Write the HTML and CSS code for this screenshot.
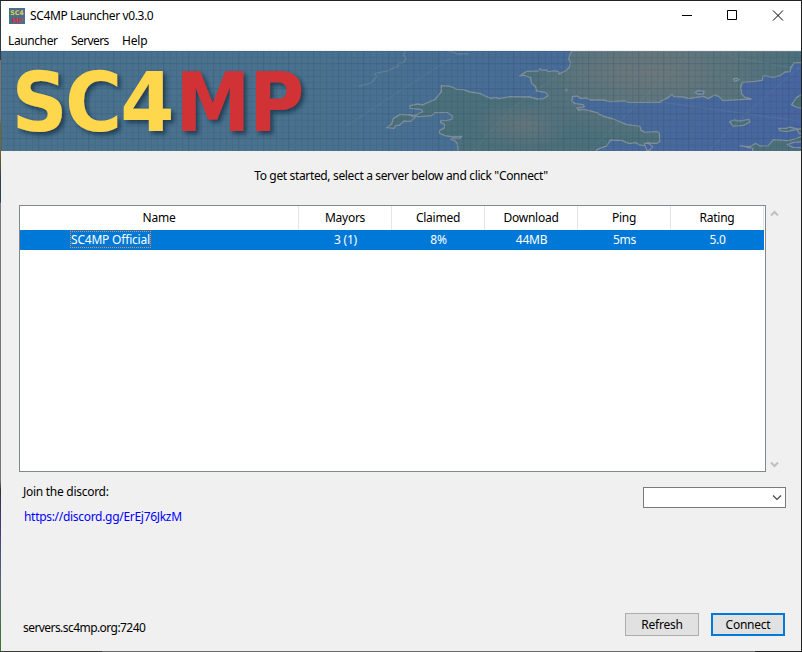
FILE: index.html
```html
<!DOCTYPE html>
<html lang="en">
<head>
<meta charset="utf-8">
<title>SC4MP Launcher v0.3.0</title>
<link rel="stylesheet" href="styles.css">
</head>
<body>
<div class="window">
  <header class="titlebar">
    <svg class="app-icon" width="16" height="16" viewBox="0 0 16 16">
      <rect width="16" height="16" fill="#49708b"/>
      <text x="1.3" y="7.2" textLength="13.4" lengthAdjust="spacingAndGlyphs" fill="#e3cb52">SC4</text>
      <text x="2.6" y="14.6" textLength="11" lengthAdjust="spacingAndGlyphs" fill="#d9303a">MP</text>
    </svg>
    <span class="title">SC4MP Launcher v0.3.0</span>
    <div class="controls">
      <svg width="46" height="29" viewBox="0 0 46 29"><path d="M19 14.5h10" /></svg>
      <svg width="46" height="29" viewBox="0 0 46 29"><path d="M18.5 9.5h9v9h-9z"/></svg>
      <svg width="46" height="29" viewBox="0 0 46 29"><path d="M18 9.5l10 10M28 9.5l-10 10"/></svg>
    </div>
  </header>
  <nav class="menu">
    <span class="menu-launcher">Launcher</span><span class="menu-servers">Servers</span><span class="menu-help">Help</span>
  </nav>
  <svg class="banner" width="800" height="100" viewBox="0 0 800 100">
    <defs>
      <linearGradient id="sea"><stop offset="0" stop-color="#4a728e"/><stop offset=".4" stop-color="#49728f"/><stop offset=".6" stop-color="#486e95"/><stop offset="1" stop-color="#4766a0"/></linearGradient>
      <radialGradient id="soil" gradientUnits="userSpaceOnUse" cx="1010" cy="70" r="430" gradientTransform="matrix(1 0 0 .5 0 35)"><stop offset="0" stop-color="#66787b"/><stop offset=".6" stop-color="#59747c"/><stop offset="1" stop-color="#4b707b"/></radialGradient>
      <radialGradient id="dust"><stop offset="0" stop-color="#6c777c" stop-opacity=".75"/><stop offset="1" stop-color="#6c777c" stop-opacity="0"/></radialGradient>
      <pattern id="grid" width="6.25" height="6.25" patternUnits="userSpaceOnUse"><path d="M.5 0v6.25M0 .5h6.25" stroke="#243c55" stroke-opacity=".14" fill="none"/></pattern>
      <pattern id="major" width="25" height="25" patternUnits="userSpaceOnUse"><path d="M12.5 0v25M0 12.5h25" stroke="#243c55" stroke-opacity=".13" fill="none"/></pattern>
      <filter id="shadow" x="-10%" y="-20%" width="125%" height="150%"><feDropShadow dx="3" dy="3" stdDeviation="2.2" flood-color="#142b3c" flood-opacity=".7"/></filter>
    </defs>
    <rect width="800" height="100" fill="url(#sea)"/>
    <g class="coast" transform="translate(319 -1) scale(.33333)">
      <path class="faint" d="M255 3L250 15L258 25L250 38L235 40L235 48L205 62L165 70L170 80L155 98L115 110M385 3L405 8L410 12L445 12"/>
      <path fill="url(#soil)" d="M415 310L412 280L405 272L392 268L398 264L420 266L425 259L400 261L375 257L357 249L360 240L372 235L374 223L362 218L362 211L378 212L395 208L397 198L382 188L345 188L335 197L300 200L280 198L270 204L262 202L265 194L285 196L295 191L308 186L304 178L270 175L270 167L292 162L308 165L322 158L345 149L356 135L364 125L364 107L390 109L412 118L430 119L450 126L478 130L512 145L528 142L535 146L570 140L630 141L652 147L671 146L684 137L677 127L650 123L647 111L634 98L632 83L612 76L599 78L620 64L655 63L659 56L665 61L680 60L684 65L705 62L715 65L718 72L725 68L738 62L748 52L752 38L746 26L754 3H1450V38L1422 39L1413 52L1410 65L1395 66L1380 77L1360 82L1330 77L1327 91L1305 94L1267 97L1262 110L1265 132L1275 142L1294 147L1260 149L1208 152L1197 139L1183 135L1165 146L1150 139L1105 146L1090 141L1063 140L1055 133L1045 143L1033 148L1018 157L925 157L915 153L870 155L850 150L811 150L800 144L782 145L772 138L758 139L755 153L766 161L790 164L793 171L770 174L776 180L788 178L805 181L830 188L851 199L880 207L920 224L960 229L963 241L975 247L1009 245L1018 248L1019 275L1010 280L984 279L975 287L958 285L948 278L928 281L905 271L871 270L860 288L830 299L825 310Z"/>
      <path fill="#4b707b" d="M200 233L215 222L220 206L240 193L270 195L285 203L272 214L252 213L238 226L228 226L222 235ZM1229 215L1242 210L1260 213L1287 208L1290 216L1270 226L1240 229ZM1260 287L1290 290L1307 280L1320 288L1345 287L1360 269L1405 272L1430 265L1450 257V275L1420 277L1402 284L1420 292L1450 293V310H1298L1298 295ZM1376 235L1400 235L1408 231L1432 237L1450 237V251L1438 251L1430 238L1400 245L1380 242ZM1450 130L1430 142L1415 164L1430 172L1450 174Z"/>
      <path fill="#4766a0" d="M1125 127L1135 122L1152 124L1150 132L1132 132ZM1240 87L1250 85L1258 89L1245 94ZM973 280L984 279L998 290L990 300L980 301Z"/>
      <path class="ray" d="M75 230L400 20M460 302L570 180L720 70M810 302L955 160L1110 10M1168 300L1280 190L1440 50M980 150L1450 215M1230 20L1450 60"/>
      <ellipse cx="610" cy="225" rx="150" ry="75" fill="url(#dust)"/><ellipse cx="960" cy="65" rx="240" ry="70" fill="url(#dust)"/>
      <circle cx="739" cy="120" r="5" fill="#71848a"/>
    </g>
    <rect width="800" height="100" fill="url(#grid)"/>
    <rect width="800" height="100" fill="url(#major)"/>
    <g class="logo" filter="url(#shadow)">
      <text transform="scale(.95 1)" y="79.7" x="11 67.5 125.6" fill="#ffd74e">SC4</text>
      <text transform="scale(.92 1)" y="79.7" x="189.4 269.6" fill="#d03335">MP</text>
    </g>
  </svg>
  <main>
    <p class="intro"><span>To get started, select a server below and click "Connect"</span></p>
    <div class="list-area">
      <div class="table">
        <div class="row head"><span>Name</span><span>Mayors</span><span>Claimed</span><span>Download</span><span>Ping</span><span>Rating</span></div>
        <div class="row selected"><span><b>SC4MP Official</b></span><span>3 (1)</span><span>8%</span><span>44MB</span><span>5ms</span><span>5.0</span></div>
      </div>
      <div class="scroll">
        <svg width="9" height="7" viewBox="0 0 9 7"><path d="M1 5.5L4.5 2L8 5.5"/></svg>
        <svg width="9" height="7" viewBox="0 0 9 7"><path d="M1 1.5L4.5 5L8 1.5"/></svg>
      </div>
    </div>
    <div class="info">
      <div><p class="join">Join the discord:</p><a class="link">https://discord.gg/ErEj76JkzM</a></div>
      <div class="combo"><svg width="10" height="7" viewBox="0 0 10 7"><path d="M1 1.5L5 5.5L9 1.5"/></svg></div>
    </div>
    <footer>
      <span class="address">servers.sc4mp.org:7240</span>
      <div class="buttons"><button>Refresh</button><button class="primary">Connect</button></div>
    </footer>
  </main>
</div>
</body>
</html>
```
FILE: styles.css
```css
* { box-sizing: border-box; }
body {
  margin: 0; width: 802px; height: 652px; padding: 1px; overflow: hidden;
  background: linear-gradient(90deg, #3b3e36 0 102px, #6c6c6c 102px 755px, #222 755px) bottom / 100% 1px no-repeat,
    linear-gradient(#222026, #29242a) top / 100% 1px no-repeat,
    linear-gradient(#222, #222) right / 1px 100% no-repeat,
    linear-gradient(#303b45 0 60px, #77736e 60px 120px, #75652f 125px 150px, #304050 180px 202px, #777 203px 480px, #333 490px, #45377c 520px, #556577 580px, #3f752d 650px);
  font: 12px/16px "Noto Sans", "Open Sans", sans-serif; color: #000;
}
p { margin: 0; }
.window { width: 800px; height: 650px; background: #f0f0f0; display: flex; flex-direction: column; }
.titlebar { height: 29px; background: #fff; display: flex; align-items: center; padding-left: 8px; }
.app-icon { font: bold 6.5px "DejaVu Sans"; }
.title { margin-left: 5px; letter-spacing: -.38px; }
.controls { display: flex; margin-left: auto; }
.controls path { fill: none; stroke: #000; stroke-width: 1; }
.menu { height: 20px; background: #fff; display: flex; padding: 3px 0 0 7px; margin-bottom: 1px; letter-spacing: -.4px; }
.menu-launcher { width: 63px; }
.menu-servers { width: 51px; letter-spacing: -.6px; }
.menu-help { letter-spacing: -.15px; }
.banner { display: block; flex: none; }
.coast path { stroke: #87959d; stroke-width: 4; stroke-opacity: .85; stroke-linejoin: round; }
.coast .faint { fill: none; stroke-opacity: .4; }
.coast .ray { fill: none; stroke: #9eb3bc; stroke-width: 2; stroke-opacity: .2; }
.logo text { font: bold 82px "DejaVu Sans"; }
main { flex: 1; display: flex; flex-direction: column; padding: 17px 15px 15px 18px; }
.intro { text-align: center; height: 37px; padding-right: 3px; letter-spacing: -.35px; }
.list-area { display: flex; height: 267px; }
.table { width: 747px; border: 1px solid #828790; background: #fff; }
.row { display: grid; grid-template-columns: 279px repeat(5, 93px); text-align: center; letter-spacing: -.25px; }
.head { height: 24px; line-height: 23px; }
.head span { border-right: 1px solid #e5e5e5; }
.selected { width: 744px; height: 20px; line-height: 20px; color: #fff; background: #0078d7; overflow: hidden; }
.selected span:first-child { text-align: left; padding: 1px 0 0 50px; }
.selected b { display: block; width: 81px; height: 17px; line-height: 15px; font-weight: normal; letter-spacing: -.2px; border: 1px dotted #ff8728; white-space: nowrap; }
.scroll { width: 17px; display: flex; flex-direction: column; align-items: center; justify-content: space-between; padding: 5px 0 4px; }
.scroll path { fill: none; stroke: #bfbfbf; stroke-width: 2; }
.info { display: flex; justify-content: space-between; padding: 12px 1px 0 4px; }
.join { letter-spacing: -.28px; }
.link { display: block; margin: 9px 0 0 1px; color: #00f; letter-spacing: -.3px; }
.combo { width: 143px; height: 21px; margin-top: 3px; margin-right: -1px; background: #fff; border: 1px solid #7a7a7a; display: flex; align-items: center; justify-content: flex-end; padding-right: 3px; }
.combo path { fill: none; stroke: #444; stroke-width: 1.2; }
footer { margin-top: auto; display: flex; justify-content: space-between; padding: 0 1px 0 4px; }
.address { padding-top: 7px; letter-spacing: -.56px; }
.buttons { display: flex; gap: 12px; }
button { width: 74px; height: 23px; padding: 1px 0 0; font: inherit; letter-spacing: -.25px; color: #000; background: #e1e1e1; border: 1px solid #adadad; }
button.primary { border: 2px solid #0078d7; }
```
